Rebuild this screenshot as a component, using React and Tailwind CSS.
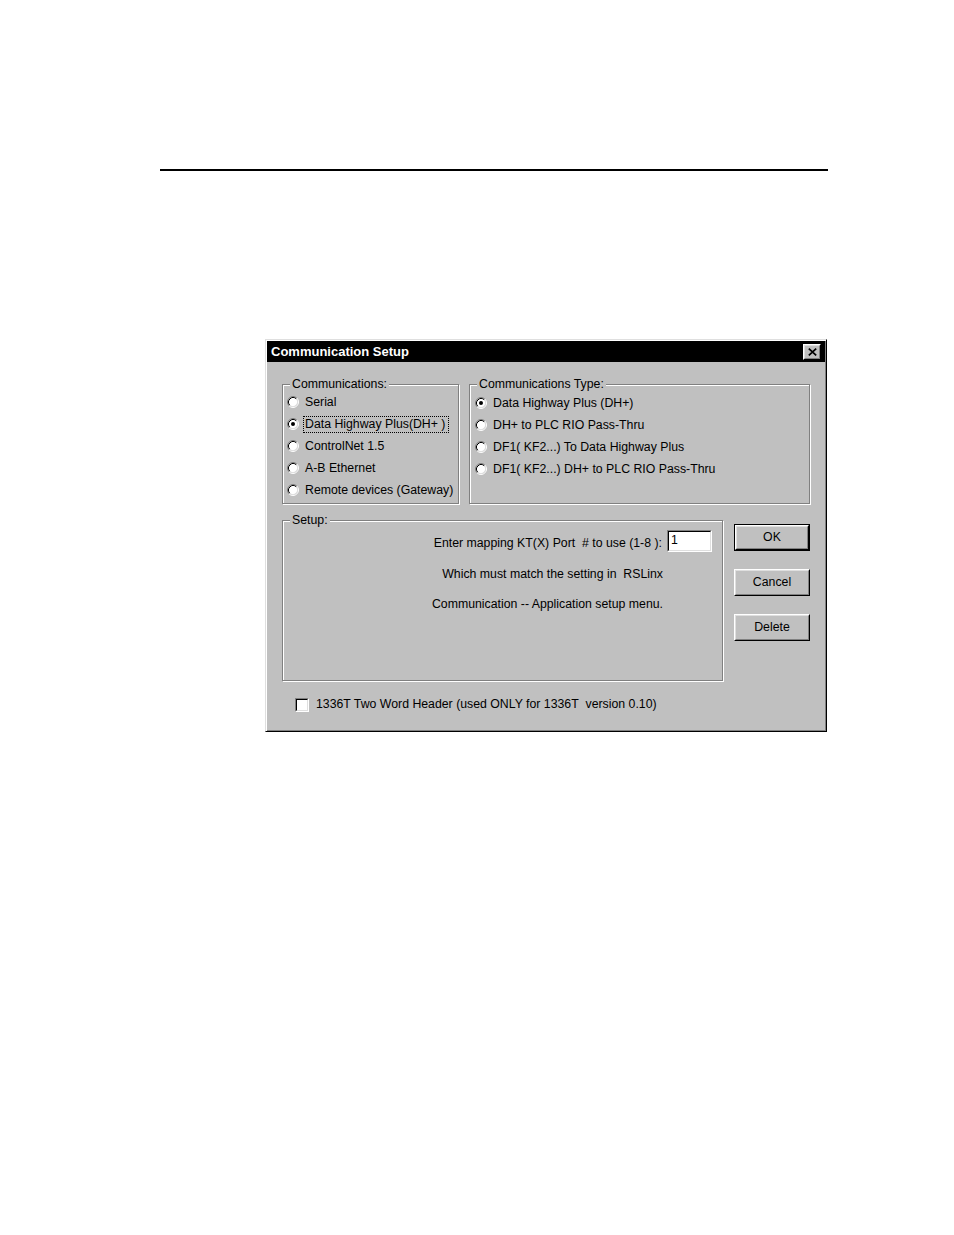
import React from "react";

const F = "font-['Liberation_Sans',Arial,sans-serif]";

function Radio({ checked }) {
  return (
    <svg width="12" height="12" viewBox="0 0 12 12" className="shrink-0">
      <circle cx="6" cy="6" r="4.5" fill="#fff" />
      <path d="M2.11 9.89 A5.5 5.5 0 0 1 9.89 2.11" stroke="#808080" fill="none" />
      <path d="M9.89 2.11 A5.5 5.5 0 0 1 2.11 9.89" stroke="#fff" fill="none" />
      <path d="M2.82 9.18 A4.5 4.5 0 0 1 9.18 2.82" stroke="#000" fill="none" />
      <path d="M9.18 2.82 A4.5 4.5 0 0 1 2.82 9.18" stroke="#dfdfdf" fill="none" />
      {checked && <circle cx="6" cy="6" r="2" fill="#000" />}
    </svg>
  );
}

function Group({ label, className, children }) {
  return (
    <div
      className={
        "relative border border-[#808080] shadow-[inset_1px_1px_0_#fff,1px_1px_0_#fff] " +
        className
      }
    >
      <span className="absolute -top-[8px] left-[7px] bg-[#c0c0c0] px-[2px] leading-[15px] text-black">
        {label}
      </span>
      {children}
    </div>
  );
}

function Button({ children, def }) {
  const inner = (
    <div className="flex h-full w-full items-center justify-center border border-t-white border-l-white border-r-black border-b-black">
      <div className="flex h-full w-full items-center justify-center border border-t-[#dfdfdf] border-l-[#dfdfdf] border-r-[#808080] border-b-[#808080] leading-none">
        {children}
      </div>
    </div>
  );
  return def ? (
    <div className="h-[27px] w-[76px] border border-black">{inner}</div>
  ) : (
    <div className="h-[27px] w-[76px]">{inner}</div>
  );
}

function Sunken({ className, children }) {
  return (
    <div className={"border border-t-[#808080] border-l-[#808080] border-r-white border-b-white " + className}>
      <div className="h-full w-full border border-t-black border-l-black border-r-[#dfdfdf] border-b-[#dfdfdf] bg-white">
        {children}
      </div>
    </div>
  );
}

export default function App() {
  const left = [
    ["Serial", false],
    ["Data Highway Plus(DH+ )", true, true],
    ["ControlNet 1.5", false],
    ["A-B Ethernet", false],
    ["Remote devices (Gateway)", false],
  ];
  const right = [
    ["Data Highway Plus (DH+)", true],
    ["DH+ to PLC RIO Pass-Thru", false],
    ["DF1( KF2...) To Data Highway Plus", false],
    ["DF1( KF2...) DH+ to PLC RIO Pass-Thru", false],
  ];
  return (
    <div className={"min-h-[1235px] w-[954px] bg-white pt-[169px] " + F}>
      <div className="ml-[160px] h-[2px] w-[668px] bg-black" />
      <div className="ml-[265px] mt-[168px] h-[393px] w-[562px] border border-t-[#dfdfdf] border-l-[#dfdfdf] border-r-black border-b-black bg-[#c0c0c0] p-[1px] shadow-[inset_1px_1px_0_#fff,inset_-1px_-1px_0_#808080] text-[12.3px] text-black">
        <div className="flex h-[21px] items-center justify-between bg-black pl-[4px] pr-[4px]">
          <span className="text-[13px] font-bold text-white">Communication Setup</span>
          <div className="h-[16px] w-[18px] border border-t-white border-l-white border-r-black border-b-black bg-[#c0c0c0]">
            <div className="flex h-full w-full items-center justify-center border border-t-[#dfdfdf] border-l-[#dfdfdf] border-r-[#808080] border-b-[#808080]">
              <svg width="9" height="8" viewBox="0 0 9 8">
                <path d="M0.8 0.6 L8.2 7.4 M8.2 0.6 L0.8 7.4" stroke="#000" strokeWidth="1.7" />
              </svg>
            </div>
          </div>
        </div>

        <div className="pl-[15px] pt-[22px]">
          <div className="flex gap-[10px]">
            <Group label="Communications:" className="h-[120px] w-[177px] pl-[4px] pt-[6px]">
              {left.map(([t, c, focus]) => (
                <div key={t} className="flex h-[22px] items-center gap-[6px]">
                  <Radio checked={c} />
                  <span
                    className={
                      "whitespace-nowrap leading-[15px] " +
                      (focus ? "outline outline-1 outline-dotted outline-black -ml-[1px] pl-[1px] pr-[3px]" : "")
                    }
                  >
                    {t}
                  </span>
                </div>
              ))}
            </Group>
            <Group label="Communications Type:" className="h-[120px] w-[341px] pl-[5px] pt-[7px]">
              {right.map(([t, c]) => (
                <div key={t} className="flex h-[22px] items-center gap-[6px]">
                  <Radio checked={c} />
                  <span className="whitespace-nowrap leading-[15px]">{t}</span>
                </div>
              ))}
            </Group>
          </div>

          <div className="mt-[16px] flex gap-[11px]">
            <Group label="Setup:" className="flex h-[161px] w-[441px] flex-col items-end pr-[10px] pt-[9px]">
              <div className="flex items-center gap-[5px]">
                <span className="whitespace-nowrap pt-[5px] leading-[15px]">Enter mapping KT(X) Port&nbsp;&nbsp;# to use (1-8 ):</span>
                <Sunken className="h-[22px] w-[45px]">
                  <div className="pl-[2px] pt-[1px] leading-[15px]">1</div>
                </Sunken>
              </div>
              <div className="mr-[49px] mt-[15px] whitespace-nowrap leading-[15px]">
                Which must match the setting in&nbsp;&nbsp;RSLinx
              </div>
              <div className="mr-[49px] mt-[15px] whitespace-nowrap leading-[15px]">
                Communication -- Application setup menu.
              </div>
            </Group>
            <div className="flex flex-col gap-[18px] pt-[4px]">
              <Button def>OK</Button>
              <Button>Cancel</Button>
              <Button>Delete</Button>
            </div>
          </div>

          <div className="ml-[13px] mt-[16px] flex items-center gap-[7px]">
            <Sunken className="h-[14px] w-[14px]" />
            <span className="whitespace-nowrap leading-[15px]">
              1336T Two Word Header (used ONLY for 1336T&nbsp;&nbsp;version 0.10)
            </span>
          </div>
        </div>
      </div>
    </div>
  );
}
